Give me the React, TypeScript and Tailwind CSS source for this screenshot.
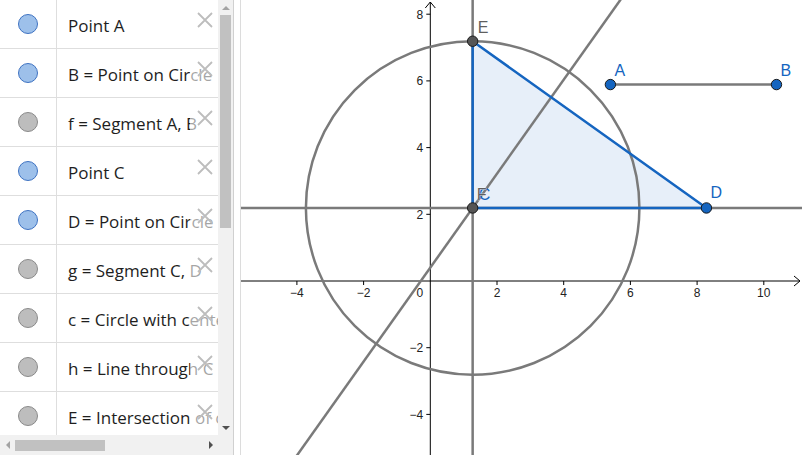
import React from 'react';

type Row = { color: 'blue' | 'gray'; text: string };

const rows: Row[] = [
    { color: 'blue', text: 'Point A' },
    { color: 'blue', text: 'B = Point on Circle' },
    { color: 'gray', text: 'f = Segment A, B' },
    { color: 'blue', text: 'Point C' },
    { color: 'blue', text: 'D = Point on Circle' },
    { color: 'gray', text: 'g = Segment C, D' },
    { color: 'gray', text: 'c = Circle with center C' },
    { color: 'gray', text: 'h = Line through C' },
    { color: 'gray', text: 'E = Intersection of c, h' },
];

// graphics view coordinate system (local px of the svg)
const s = 33.35;
const ox = 189.3;
const oy = 281;
const X = (x: number) => ox + x * s;
const Y = (y: number) => oy - y * s;

const C = { x: X(1.27), y: Y(2.19) };
const E = { x: X(1.27), y: Y(7.19) };
const D = { x: X(8.28), y: Y(2.19) };
const A = { x: X(5.4), y: Y(5.89) };
const B = { x: X(10.38), y: Y(5.89) };

const GRAY = '#7a7a7a';
const BLUE = '#1565c0';

const CloseX = () => (
    <svg width="18" height="18" viewBox="0 0 18 18">
        <path d="M2 2 L16 16 M16 2 L2 16" stroke="#bdbdbd" strokeWidth="1.8" fill="none" />
    </svg>
);

const AlgebraRow: React.FC<{ row: Row }> = ({ row }) => (
    <div className="h-[49px] shrink-0 flex border-b border-[#dedede]">
        <div className="w-[57px] shrink-0 flex items-center justify-center border-r border-[#dedede]">
            <div
                className={
                    row.color === 'blue'
                        ? 'w-[20px] h-[20px] rounded-full bg-[#9dc0ea] border border-[#3f73c2]'
                        : 'w-[20px] h-[20px] rounded-full bg-[#bdbdbd] border border-[#8a8a8a]'
                }
            />
        </div>
        <div className="relative flex-1 overflow-hidden flex items-center pl-[11px] pt-[4px] whitespace-nowrap text-[17px] text-[#1e1e1e]">
            {row.text}
            <div className="absolute right-0 top-0 bottom-0 w-[28px] bg-white/60">
                <div className="absolute right-[4px] top-[11px]">
                    <CloseX />
                </div>
            </div>
        </div>
    </div>
);

const xTicks = [-4, -2, 2, 4, 6, 8, 10];
const yTicks = [8, 6, 4, 2, -2, -4];

const Graphics = () => {
    const k = 0.71; // x px per y px for line h
    const top = -5;
    const bottom = 460;
    return (
        <svg width="561" height="455" viewBox="0 0 561 455" className="block">
            {/* axes */}
            <line x1="0" y1={oy} x2="559" y2={oy} stroke="#000" strokeWidth="1" />
            <path d={`M553 ${oy - 5} L559 ${oy} L553 ${oy + 5}`} stroke="#000" fill="none" strokeWidth="1" />
            <line x1={ox} y1="455" x2={ox} y2="2" stroke="#000" strokeWidth="1" />
            <path d={`M${ox - 5} 8 L${ox} 2 L${ox + 5} 8`} stroke="#000" fill="none" strokeWidth="1" />
            {xTicks.map(t => (
                <g key={`x${t}`}>
                    <line x1={X(t)} y1={oy} x2={X(t)} y2={oy + 4} stroke="#000" strokeWidth="1" />
                    <text x={X(t)} y={oy + 16} textAnchor="middle" fontSize="12" fill="#222" fontFamily="'Liberation Sans', Arial, sans-serif">
                        {t < 0 ? `\u2212${-t}` : t}
                    </text>
                </g>
            ))}
            {yTicks.map(t => (
                <g key={`y${t}`}>
                    <line x1={ox - 4} y1={Y(t)} x2={ox} y2={Y(t)} stroke="#000" strokeWidth="1" />
                    <text x={ox - 7} y={Y(t) + 4.5} textAnchor="end" fontSize="12" fill="#222" fontFamily="'Liberation Sans', Arial, sans-serif">
                        {t < 0 ? `\u2212${-t}` : t}
                    </text>
                </g>
            ))}
            <text x={ox - 7} y={oy + 16} textAnchor="end" fontSize="12" fill="#222" fontFamily="'Liberation Sans', Arial, sans-serif">0</text>

            {/* polygon fill */}
            <polygon points={`${E.x},${E.y} ${C.x},${C.y} ${D.x},${D.y}`} fill="#1565c0" fillOpacity="0.1" />

            {/* gray objects */}
            <line x1="0" y1={C.y} x2="561" y2={C.y} stroke={GRAY} strokeWidth="2.5" />
            <line x1={C.x} y1="0" x2={C.x} y2="455" stroke={GRAY} strokeWidth="2.5" />
            <line
                x1={C.x + (C.y - top) * k}
                y1={top}
                x2={C.x - (bottom - C.y) * k}
                y2={bottom}
                stroke={GRAY}
                strokeWidth="2.5"
            />
            <circle cx={C.x} cy={C.y} r={5 * s} stroke={GRAY} strokeWidth="2.5" fill="none" />
            <line x1={A.x} y1={A.y} x2={B.x} y2={B.y} stroke={GRAY} strokeWidth="2.5" />

            {/* triangle edges */}
            <polygon points={`${E.x},${E.y} ${C.x},${C.y} ${D.x},${D.y}`} fill="none" stroke={BLUE} strokeWidth="2.5" strokeLinejoin="round" />

            {/* points */}
            {[A, B, D].map((p, i) => (
                <circle key={i} cx={p.x} cy={p.y} r="5.2" fill={BLUE} stroke="#1a1a1a" strokeWidth="1" />
            ))}
            {[E, C].map((p, i) => (
                <circle key={`g${i}`} cx={p.x} cy={p.y} r="5.2" fill="#555" stroke="#1a1a1a" strokeWidth="1" />
            ))}

            {/* labels */}
            <g fontFamily="'Liberation Sans', Arial, sans-serif" fontSize="16">
                <text x={A.x + 4} y={A.y - 9} fill={BLUE}>A</text>
                <text x={B.x + 4} y={B.y - 9} fill={BLUE}>B</text>
                <text x={D.x + 4} y={D.y - 10} fill={BLUE}>D</text>
                <text x={E.x + 5} y={E.y - 8} fill="#5f5f5f">E</text>
                <text x={C.x + 6} y={C.y - 8} fill={BLUE}>C</text>
                <text x={C.x + 4} y={C.y - 8} fill="#5f5f5f" stroke="#fff" strokeWidth="0.6" paintOrder="stroke">F</text>
            </g>
        </svg>
    );
};

const App: React.FC = () => {
    return (
        <div className="w-[802px] h-[455px] flex bg-white overflow-hidden" style={{ fontFamily: "'Open Sans', 'Noto Sans', sans-serif" }}>
            {/* Algebra view */}
            <div className="w-[233px] h-full flex flex-col shrink-0">
                <div className="flex-1 flex min-h-0">
                    <div className="w-[218px] flex flex-col overflow-hidden">
                        {rows.map((r, i) => (
                            <AlgebraRow key={i} row={r} />
                        ))}
                    </div>
                    {/* vertical scrollbar */}
                    <div className="w-[15px] bg-[#f1f1f1] flex flex-col items-center">
                        <div className="h-[15px] flex items-center justify-center">
                            <div className="w-0 h-0 border-l-[4px] border-r-[4px] border-b-[4px] border-l-transparent border-r-transparent border-b-[#a3a3a3]" />
                        </div>
                        <div className="w-[11px] h-[213px] bg-[#c1c1c1]" />
                        <div className="flex-1" />
                        <div className="h-[15px] flex items-center justify-center">
                            <div className="w-0 h-0 border-l-[4px] border-r-[4px] border-t-[4px] border-l-transparent border-r-transparent border-t-[#505050]" />
                        </div>
                    </div>
                </div>
                {/* horizontal scrollbar */}
                <div className="h-[20px] flex shrink-0">
                    <div className="w-[218px] bg-[#f1f1f1] flex items-center">
                        <div className="w-[15px] flex items-center justify-center">
                            <div className="w-0 h-0 border-t-[4px] border-b-[4px] border-r-[4px] border-t-transparent border-b-transparent border-r-[#a3a3a3]" />
                        </div>
                        <div className="w-[90px] h-[11px] bg-[#c1c1c1]" />
                        <div className="flex-1" />
                        <div className="w-[15px] flex items-center justify-center">
                            <div className="w-0 h-0 border-t-[4px] border-b-[4px] border-l-[4px] border-t-transparent border-b-transparent border-l-[#505050]" />
                        </div>
                    </div>
                    <div className="w-[15px] bg-[#f1f1f1]" />
                </div>
            </div>
            {/* splitter */}
            <div className="w-[8px] h-full shrink-0 border-l border-[#d0d0d0] border-r border-r-[#dcdcdc] bg-white" />
            {/* Graphics view */}
            <div className="flex-1 h-full">
                <Graphics />
            </div>
        </div>
    );
};

export default App;
